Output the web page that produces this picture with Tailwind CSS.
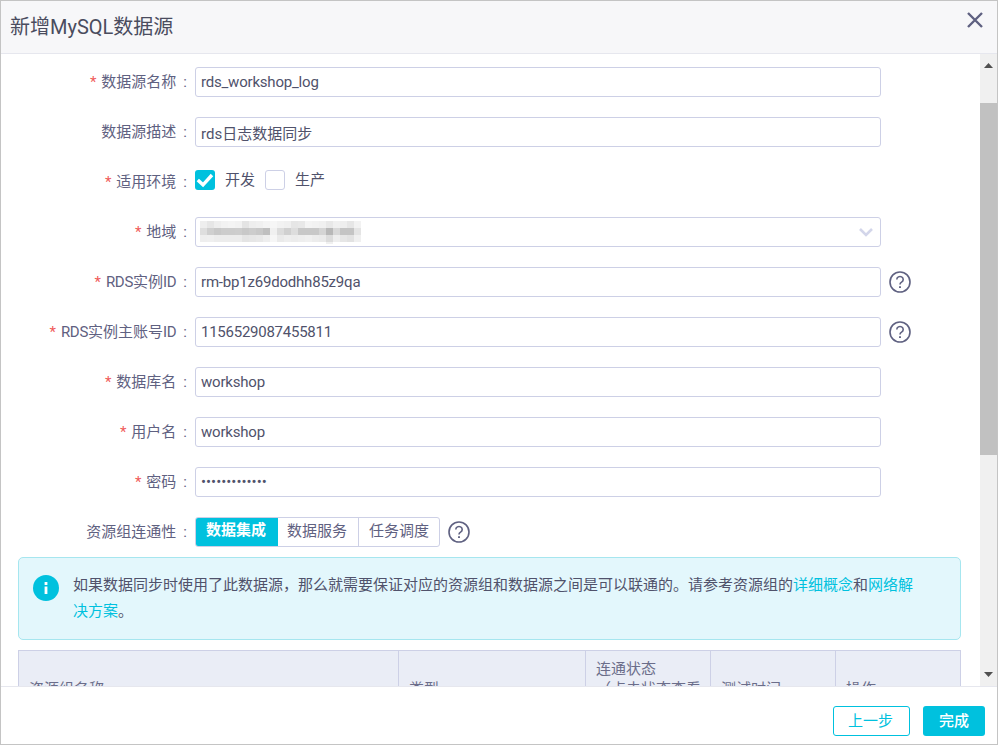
<!DOCTYPE html>
<html lang="zh-CN">
<head>
  <meta charset="UTF-8" />
  <title>新增MySQL数据源</title>
  <script src="https://cdn.jsdelivr.net/npm/@tailwindcss/browser@4"></script>
</head>
<body class="bg-white font-['Roboto','Noto_Sans_CJK_SC',sans-serif]">
  <div class="w-[998px] h-[745px] flex flex-col border border-[#c4c4c4] bg-white overflow-hidden">
    <!-- header -->
    <header class="h-[53px] shrink-0 flex items-center justify-between pl-[9px] pr-[13px] bg-[#f7f7f9] border-b border-[#e6e7ee]">
      <h1 class="text-[20px] leading-[48px] text-[#4a4c5e]">新增MySQL数据源</h1>
      <svg class="w-[18px] h-[18px] mb-[14px]" viewBox="0 0 18 18" fill="none" stroke="#5f6181" stroke-width="2.4"><path d="M2 2 16 16M16 2 2 16"/></svg>
    </header>

    <div class="flex-1 flex min-h-0">
      <!-- form -->
      <main class="w-[979px] overflow-hidden pt-[13px] pl-[17px] pr-[19px] text-[15px] text-[#5f6181]">
        <div class="flex h-[30px] mb-5 items-center">
          <label class="w-[177px] pr-[8px] text-right leading-[30px]"><span class="text-[#f05a5a] mr-[5px]">*</span>数据源名称<span class="ml-[7px]">:</span></label>
          <input class="w-[686px] h-[30px] border border-[#cdd0e6] rounded-[3px] px-[5px] text-[#50526b] tracking-[-0.2px] outline-none" value="rds_workshop_log" />
        </div>
        <div class="flex h-[30px] mb-5 items-center">
          <label class="w-[177px] pr-[8px] text-right leading-[30px]">数据源描述<span class="ml-[7px]">:</span></label>
          <input class="w-[686px] h-[30px] border border-[#cdd0e6] rounded-[3px] px-[5px] text-[#50526b] outline-none" value="rds日志数据同步" />
        </div>
        <div class="flex h-[30px] mb-5 items-center">
          <label class="w-[177px] pr-[8px] text-right leading-[30px]"><span class="text-[#f05a5a] mr-[5px]">*</span>适用环境<span class="ml-[7px]">:</span></label>
          <div class="flex items-center text-[#50526b] -mt-[4px]">
            <svg class="w-5 h-5" viewBox="0 0 20 20"><rect width="20" height="20" rx="3" fill="#00c1de"/><path d="M2.8 10 8 14.8 17 5" fill="none" stroke="#fff" stroke-width="3.4"/></svg>
            <span class="ml-[10px]">开发</span>
            <span class="w-5 h-5 ml-[10px] rounded-[3px] border border-[#cdd0e6]"></span>
            <span class="ml-[10px]">生产</span>
          </div>
        </div>
        <div class="flex h-[30px] mb-5 items-center">
          <label class="w-[177px] pr-[8px] text-right leading-[30px]"><span class="text-[#f05a5a] mr-[5px]">*</span>地域<span class="ml-[7px]">:</span></label>
          <div class="w-[686px] h-[30px] border border-[#cdd0e6] rounded-[3px] flex items-center justify-between pl-[4px] pr-[7px]">
            <!-- mosaic over the hidden region name -->
            <svg class="self-start mt-[3px]" width="161" height="23" viewBox="0 0 161 23" shape-rendering="crispEdges">
              <rect x="0" y="0" width="7" height="7" fill="#eeeeee"/><rect x="7" y="0" width="7" height="7" fill="#e6e6e6"/><rect x="14" y="0" width="7" height="7" fill="#eeeeee"/><rect x="21" y="0" width="7" height="7" fill="#f2f2f2"/><rect x="28" y="0" width="7" height="7" fill="#f4f4f4"/><rect x="35" y="0" width="7" height="7" fill="#f2f2f2"/><rect x="42" y="0" width="7" height="7" fill="#e4e4e4"/><rect x="49" y="0" width="7" height="7" fill="#eeeeee"/><rect x="56" y="0" width="7" height="7" fill="#f0f0f0"/><rect x="63" y="0" width="7" height="7" fill="#f4f4f4"/><rect x="70" y="0" width="7" height="7" fill="#f6f6f6"/><rect x="77" y="0" width="7" height="7" fill="#f2f2f2"/><rect x="84" y="0" width="7" height="7" fill="#f0f0f0"/><rect x="91" y="0" width="7" height="7" fill="#e6e6e6"/><rect x="98" y="0" width="7" height="7" fill="#e8e8e8"/><rect x="105" y="0" width="7" height="7" fill="#f4f4f4"/><rect x="112" y="0" width="7" height="7" fill="#f2f2f2"/><rect x="119" y="0" width="7" height="7" fill="#f0f0f0"/><rect x="126" y="0" width="7" height="7" fill="#e8e8e8"/><rect x="133" y="0" width="7" height="7" fill="#f0f0f0"/><rect x="140" y="0" width="7" height="7" fill="#eeeeee"/><rect x="147" y="0" width="7" height="7" fill="#e6e6e6"/><rect x="154" y="0" width="7" height="7" fill="#f2f2f2"/>
              <rect x="0" y="7" width="7" height="7" fill="#dedede"/><rect x="7" y="7" width="7" height="7" fill="#cfcfcf"/><rect x="14" y="7" width="7" height="7" fill="#c8c8c8"/><rect x="21" y="7" width="7" height="7" fill="#cccccc"/><rect x="28" y="7" width="7" height="7" fill="#cccccc"/><rect x="35" y="7" width="7" height="7" fill="#cdcdcd"/><rect x="42" y="7" width="7" height="7" fill="#c8c8c8"/><rect x="49" y="7" width="7" height="7" fill="#cccccc"/><rect x="56" y="7" width="7" height="7" fill="#c8c8c8"/><rect x="63" y="7" width="7" height="7" fill="#bfbfbf"/><rect x="70" y="7" width="7" height="7" fill="#f0f0f0"/><rect x="77" y="7" width="7" height="7" fill="#dcdcdc"/><rect x="84" y="7" width="7" height="7" fill="#d0d0d0"/><rect x="91" y="7" width="7" height="7" fill="#dddddd"/><rect x="98" y="7" width="7" height="7" fill="#c8c8c8"/><rect x="105" y="7" width="7" height="7" fill="#c8c8c8"/><rect x="112" y="7" width="7" height="7" fill="#c8c8c8"/><rect x="119" y="7" width="7" height="7" fill="#d4d4d4"/><rect x="126" y="7" width="7" height="7" fill="#b8b8b8"/><rect x="133" y="7" width="7" height="7" fill="#d8d8d8"/><rect x="140" y="7" width="7" height="7" fill="#c4c4c4"/><rect x="147" y="7" width="7" height="7" fill="#c4c4c4"/><rect x="154" y="7" width="7" height="7" fill="#e4e4e4"/>
              <rect x="0" y="14" width="7" height="7" fill="#eeeeee"/><rect x="7" y="14" width="7" height="7" fill="#efefef"/><rect x="14" y="14" width="7" height="7" fill="#ececec"/><rect x="21" y="14" width="7" height="7" fill="#ececec"/><rect x="28" y="14" width="7" height="7" fill="#ececec"/><rect x="35" y="14" width="7" height="7" fill="#ececec"/><rect x="42" y="14" width="7" height="7" fill="#e4e4e4"/><rect x="49" y="14" width="7" height="7" fill="#e6e6e6"/><rect x="56" y="14" width="7" height="7" fill="#e8e8e8"/><rect x="63" y="14" width="7" height="7" fill="#eeeeee"/><rect x="70" y="14" width="7" height="7" fill="#f6f6f6"/><rect x="77" y="14" width="7" height="7" fill="#eaeaea"/><rect x="84" y="14" width="7" height="7" fill="#eeeeee"/><rect x="91" y="14" width="7" height="7" fill="#ececec"/><rect x="98" y="14" width="7" height="7" fill="#eeeeee"/><rect x="105" y="14" width="7" height="7" fill="#f0f0f0"/><rect x="112" y="14" width="7" height="7" fill="#ececec"/><rect x="119" y="14" width="7" height="7" fill="#eaeaea"/><rect x="126" y="14" width="7" height="7" fill="#dcdcdc"/><rect x="133" y="14" width="7" height="7" fill="#eeeeee"/><rect x="140" y="14" width="7" height="7" fill="#e6e6e6"/><rect x="147" y="14" width="7" height="7" fill="#e2e2e2"/><rect x="154" y="14" width="7" height="7" fill="#f0f0f0"/>
              <rect x="126" y="21" width="7" height="2" fill="#f0f0f0"/>
            </svg>
            <svg class="w-[14px] h-[10px]" viewBox="0 0 14 10" fill="none" stroke="#d3d6ea" stroke-width="2.6"><path d="M1 2 7 8 13 2"/></svg>
          </div>
        </div>
        <div class="flex h-[30px] mb-5 items-center">
          <label class="w-[177px] pr-[8px] text-right leading-[30px]"><span class="text-[#f05a5a] mr-[5px]">*</span><span class="tracking-[-0.3px]">RDS</span>实例<span class="tracking-[-0.3px]">ID</span><span class="ml-[7px]">:</span></label>
          <input class="w-[686px] h-[30px] border border-[#cdd0e6] rounded-[3px] px-[5px] text-[#50526b] tracking-[-0.2px] outline-none" value="rm-bp1z69dodhh85z9qa" />
          <svg class="w-[22px] h-[22px] ml-[8px]" viewBox="0 0 22 22" fill="none" stroke="#5f6181" stroke-width="1.6"><circle cx="11" cy="11" r="10"/><path d="M7.8 8.5a3.2 3 0 1 1 4.8 2.6c-1 .6-1.6 1.2-1.6 2.4"/><path d="M11 15.2v1.8" stroke-width="1.9"/></svg>
        </div>
        <div class="flex h-[30px] mb-5 items-center">
          <label class="w-[177px] pr-[8px] text-right leading-[30px] whitespace-nowrap"><span class="text-[#f05a5a] mr-[5px]">*</span><span class="tracking-[-0.3px]">RDS</span>实例主账号<span class="tracking-[-0.3px]">ID</span><span class="ml-[7px]">:</span></label>
          <input class="w-[686px] h-[30px] border border-[#cdd0e6] rounded-[3px] px-[5px] text-[#50526b] tracking-[-0.25px] outline-none" value="1156529087455811" />
          <svg class="w-[22px] h-[22px] ml-[8px]" viewBox="0 0 22 22" fill="none" stroke="#5f6181" stroke-width="1.6"><circle cx="11" cy="11" r="10"/><path d="M7.8 8.5a3.2 3 0 1 1 4.8 2.6c-1 .6-1.6 1.2-1.6 2.4"/><path d="M11 15.2v1.8" stroke-width="1.9"/></svg>
        </div>
        <div class="flex h-[30px] mb-5 items-center">
          <label class="w-[177px] pr-[8px] text-right leading-[30px]"><span class="text-[#f05a5a] mr-[5px]">*</span>数据库名<span class="ml-[7px]">:</span></label>
          <input class="w-[686px] h-[30px] border border-[#cdd0e6] rounded-[3px] px-[5px] text-[#50526b] tracking-[-0.2px] outline-none" value="workshop" />
        </div>
        <div class="flex h-[30px] mb-5 items-center">
          <label class="w-[177px] pr-[8px] text-right leading-[30px]"><span class="text-[#f05a5a] mr-[5px]">*</span>用户名<span class="ml-[7px]">:</span></label>
          <input class="w-[686px] h-[30px] border border-[#cdd0e6] rounded-[3px] px-[5px] text-[#50526b] tracking-[-0.2px] outline-none" value="workshop" />
        </div>
        <div class="flex h-[30px] mb-5 items-center">
          <label class="w-[177px] pr-[8px] text-right leading-[30px]"><span class="text-[#f05a5a] mr-[5px]">*</span>密码<span class="ml-[7px]">:</span></label>
          <input type="password" class="w-[686px] h-[30px] border border-[#cdd0e6] rounded-[3px] px-[5px] text-[#50526b] outline-none" value="workshop12345" />
        </div>
        <div class="flex h-[30px] items-center">
          <label class="w-[177px] pr-[8px] text-right leading-[30px]">资源组连通性<span class="ml-[7px]">:</span></label>
          <div class="flex h-[30px] leading-[26px] border border-[#cdd0e6] rounded-[3px] overflow-hidden">
            <span class="w-[83px] pr-px -my-px -ml-px h-[30px] bg-[#00c1de] text-white font-bold text-center">数据集成</span>
            <span class="w-[81px] pr-[2px] text-center border-r border-[#cdd0e6]">数据服务</span>
            <span class="w-[80px] text-center">任务调度</span>
          </div>
          <svg class="w-[22px] h-[22px] ml-[8px]" viewBox="0 0 22 22" fill="none" stroke="#5f6181" stroke-width="1.6"><circle cx="11" cy="11" r="10"/><path d="M7.8 8.5a3.2 3 0 1 1 4.8 2.6c-1 .6-1.6 1.2-1.6 2.4"/><path d="M11 15.2v1.8" stroke-width="1.9"/></svg>
        </div>

        <!-- notice -->
        <div class="mt-[10px] w-[943px] h-[83px] flex border border-[#a6e6ef] rounded-[5px] bg-[#e3f7fc] pl-[14px] pt-[17px]">
          <svg class="w-[26px] h-[26px] shrink-0" viewBox="0 0 26 26"><circle cx="13" cy="13" r="13" fill="#00c1de"/><rect x="11.6" y="7" width="2.8" height="3" fill="#fff"/><rect x="11.6" y="11.5" width="2.8" height="7.5" fill="#fff"/></svg>
          <p class="ml-[14px] w-[848px] -mt-[3px] leading-[26px] text-[#50526b]">如果数据同步时使用了此数据源，那么就需要保证对应的资源组和数据源之间是可以联通的。请参考资源组的<a class="text-[#00c1de]">详细概念</a>和<a class="text-[#00c1de]">网络解决方案</a>。</p>
        </div>

        <!-- table -->
        <div class="mt-[10px] w-[943px] h-[78px] grid grid-cols-[380px_187px_125px_125px_126px] items-stretch bg-[#eaedf6] border border-[#cdd0e6] text-[#6b6d8a] leading-[20px]">
          <div class="flex items-center px-[10px] border-r border-[#cdd0e6]">资源组名称</div>
          <div class="flex items-center px-[10px] border-r border-[#cdd0e6]">类型</div>
          <div class="flex items-center pl-[10px] border-r border-[#cdd0e6] whitespace-nowrap"><span>连通状态<br />（点击状态查看<br />详情）</span></div>
          <div class="flex items-center px-[10px] border-r border-[#cdd0e6]">测试时间</div>
          <div class="flex items-center px-[10px]">操作</div>
        </div>
      </main>

      <!-- scrollbar -->
      <div class="w-[17px] ml-px shrink-0 bg-[#f0f0f0] flex flex-col items-center">
        <svg class="w-[9px] h-[5px] mt-[9px] mb-[35px]" viewBox="0 0 9 5"><path d="M4.5 0 9 5H0Z" fill="#505050"/></svg>
        <div class="w-[17px] h-[352px] bg-[#c1c1c1]"></div>
        <svg class="w-[9px] h-[5px] mt-[217px]" viewBox="0 0 9 5"><path d="M0 0H9L4.5 5Z" fill="#505050"/></svg>
      </div>
    </div>

    <!-- footer -->
    <footer class="h-[58px] shrink-0 flex justify-end items-start gap-[13px] pt-[19px] pr-[12px] bg-white border-t border-[#e6e7ee] text-[15px]">
      <button class="w-[77px] h-[30px] pr-[2px] border border-[#00c1de] rounded-[3px] text-[#00c1de]">上一步</button>
      <button class="w-[62px] h-[30px] bg-[#00c1de] rounded-[3px] text-white font-medium">完成</button>
    </footer>
  </div>
</body>
</html>
